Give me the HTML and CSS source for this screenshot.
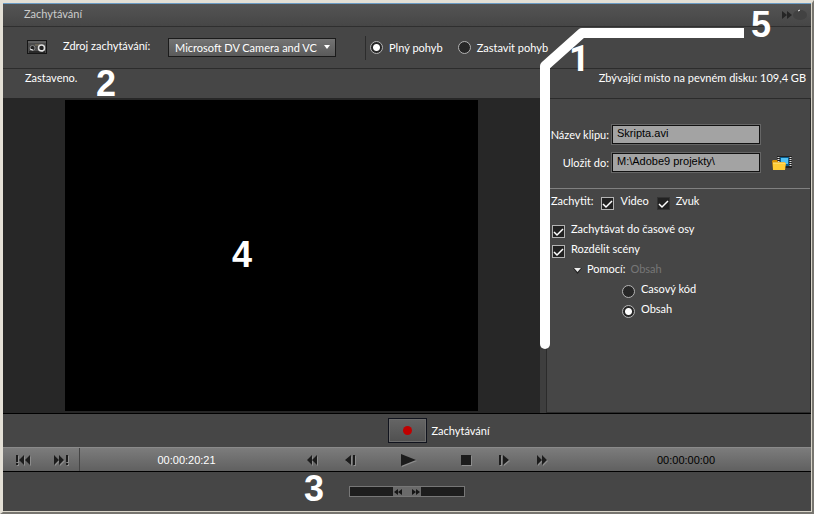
FILE: index.html
```html
<!DOCTYPE html>
<html lang="cs">
<head>
  <meta charset="UTF-8" />
  <meta name="viewport" content="width=device-width, initial-scale=1.0"/>
  <title>Zachytávání</title>
  <link rel="stylesheet" href="styles.css">
</head>
<body>

  <div class="window">

    <!-- Title bar -->
    <header class="title-bar">
      <h1>Zachytávání</h1>
      <button class="more-btn" aria-label="Další volby">
        <svg width="26" height="12" viewBox="0 0 26 12">
          <path d="M1 2l5 4-5 4zM6 2l5 4-5 4z" fill="#252525"/>
          <ellipse cx="19" cy="6" rx="7" ry="5" fill="#424242"/>
          <path d="M17 2l2-1" stroke="#eee"/>
        </svg>
      </button>
    </header>

    <!-- Capture source -->
    <div class="source-bar">
      <svg class="tape-icon" width="20" height="15" viewBox="0 0 20 15">
        <rect x=".5" y=".5" width="19" height="13" fill="#4b4b4b" stroke="#161616"/>
        <path d="M1 2h18" stroke="#777"/>
        <path d="M2 12h16" stroke="#292929" stroke-width="2"/>
        <path d="M8 5h5" stroke="#887f65"/>
        <circle cx="5.500" cy="8" r="2.500" fill="#222" stroke="#888"/>
        <circle cx="14.500" cy="8" r="3" fill="#222" stroke="#ddd" stroke-width="1.500"/>
        <path d="M3 9l3 1M12 10l4 1" stroke="#eee"/>
      </svg>
      <label class="source-label" for="source">Zdroj zachytávání:</label>
      <div class="select-box">
        <select id="source">
          <option>Microsoft DV Camera and VC</option>
        </select>
      </div>
      <div class="motion">
        <label><input type="radio" name="motion" checked> Plný pohyb</label>
        <label><input type="radio" name="motion"> Zastavit pohyb</label>
      </div>
    </div>

    <!-- Status -->
    <div class="status-bar">
      <span>Zastaveno.</span>
      <span>Zbývající místo na pevném disku: 109,4 GB</span>
    </div>

    <!-- Monitor and settings -->
    <main class="content">
      <div class="monitor">
        <div class="video"></div>
      </div>
      <div class="splitter"></div>
      <form class="settings">
        <div class="clip-fields">
          <label for="clipName">Název klipu:</label>
          <input type="text" id="clipName" value="Skripta.avi">
          <span></span>
          <label for="saveTo">Uložit do:</label>
          <input type="text" id="saveTo" value="M:\Adobe9 projekty\">
          <button type="button" class="folder-btn" aria-label="Procházet">
            <svg width="21" height="16" viewBox="0 0 21 16">
              <rect x="5" y="1" width="15" height="12" fill="#222"/>
              <path d="M6.500 2v10M18.500 2v10" stroke="#ddd" stroke-width="2" stroke-dasharray="1 1"/>
              <rect x="8" y="2" width="9" height="9" fill="#0b5d8e"/>
              <rect x="9" y="3" width="7" height="6" fill="#53c2f3"/>
              <path d="M0 6l1-1h4l1 2h7v8H1z" fill="#dc9400"/>
              <path d="M1 8h13l-1 7H1z" fill="#ffcc35"/>
              <path d="M1 8h12" stroke="#ffe88a"/>
            </svg>
          </button>
        </div>

        <div class="options">
          <div class="option-row">
            <span class="row-name">Zachytit:</span>
            <label><input type="checkbox" checked> <span>Video</span></label>
            <label><input type="checkbox" class="dim" checked> <span>Zvuk</span></label>
          </div>
          <div class="option-list">
            <label><input type="checkbox" checked> <span>Zachytávat do časové osy</span></label>
            <label><input type="checkbox" checked> <span>Rozdělit scény</span></label>
            <div class="method">
              <svg width="9" height="6" viewBox="0 0 9 6"><path d="M0 0h9L4.500 6z" fill="#222"/><path d="M1 0h7L4.500 4z" fill="#eee"/></svg>
              <span>Pomocí:</span>
              <span class="muted">Obsah</span>
            </div>
            <div class="method-list">
              <label><input type="radio" name="method"> <span>Casový kód</span></label>
              <label><input type="radio" name="method" checked> <span>Obsah</span></label>
            </div>
          </div>
        </div>
      </form>
    </main>

    <!-- Record -->
    <div class="record-bar">
      <button class="record-btn" id="record" aria-label="Zachytávání"><span class="dot"></span></button>
      <label for="record">Zachytávání</label>
    </div>

    <!-- Transport -->
    <div class="transport">
      <div class="scene-btns">
        <button aria-label="Předchozí scéna">
          <svg width="16" height="12" viewBox="0 0 16 12"><path d="M1 1h2v7H1zM1 9h2v2H1zM9 1v10L4 6zM15 1v10l-5-5z"/></svg>
        </button>
        <button aria-label="Další scéna">
          <svg width="16" height="12" viewBox="0 0 16 12"><path d="M1 1v10l5-5zM6 1v10l5-5zM13 1h2v7h-2zM13 9h2v2h-2z"/></svg>
        </button>
      </div>
      <span class="timecode current">00:00:20:21</span>
      <div class="play-btns">
        <button aria-label="Přetočit zpět">
          <svg width="12" height="12" viewBox="0 0 12 12"><path d="M6 1v10L1 6zM11 1v10L6 6z"/></svg>
        </button>
        <button aria-label="Krok zpět">
          <svg width="12" height="12" viewBox="0 0 12 12"><path d="M7 1v10L1 6zM9 1h2v10H9z"/></svg>
        </button>
        <button class="play-btn" aria-label="Přehrát">
          <svg width="16" height="12" viewBox="0 0 16 12"><path d="M1 0l15 6-15 6z"/></svg>
        </button>
        <button aria-label="Zastavit">
          <svg width="12" height="12" viewBox="0 0 12 12"><path d="M1 1h10v10H1z"/></svg>
        </button>
        <button aria-label="Krok vpřed">
          <svg width="12" height="12" viewBox="0 0 12 12"><path d="M1 1h2v10H1zM5 1v10l6-5z"/></svg>
        </button>
        <button aria-label="Přetočit vpřed">
          <svg width="12" height="12" viewBox="0 0 12 12"><path d="M1 1v10l5-5zM6 1v10l5-5z"/></svg>
        </button>
      </div>
      <span class="timecode total">00:00:00:00</span>
    </div>

    <!-- Shuttle -->
    <div class="shuttle">
      <input type="range" min="-10" max="10" value="0" aria-label="Rychlost posunu">
    </div>

  </div>

  <!-- Callouts over the window -->
  <div class="callouts">
    <svg width="814" height="360" viewBox="0 0 814 360">
      <path d="M744 33H582L545 66V344" fill="none" stroke="#fff" stroke-width="10" stroke-linejoin="round"/>
      <circle cx="545" cy="344" r="5" fill="#fff"/>
    </svg>
    <span class="num one">1</span>
    <span class="num two">2</span>
    <span class="num three">3</span>
    <span class="num four">4</span>
    <span class="num five">5</span>
  </div>

</body>
</html>
```
FILE: styles.css
```css
* {
  box-sizing: border-box;
}

body {
  margin: 0;
  position: relative;
  font-family: Lato, sans-serif;
  font-size: 11px;
  line-height: 16px;
  color: #fff;
  background: #464646;
}

button {
  padding: 0;
  border: none;
  background: none;
  cursor: pointer;
}

svg {
  display: block;
}

.window {
  display: flex;
  flex-direction: column;
  min-height: 100vh;
  padding: 0 1px 1px 0;
  border: 3px solid #e4e0d6;
  border-right: 2px solid #77756f;
  border-bottom: 2px solid #77756f;
  background: #464646;
  box-shadow: inset -1px -1px 0 #d8d4c8;
}

/* Title bar */
.title-bar {
  display: flex;
  justify-content: space-between;
  align-items: center;
  height: 24px;
  padding: 0 4px 0 21px;
  border-bottom: 1px solid #2f2f2f;
  background: linear-gradient(#545454, #464646);
  border-top: 1px solid #6b9cc5;
}

.title-bar h1 {
  margin: 0;
  padding-bottom: 2px;
  font-size: 11px;
  font-weight: 400;
  color: #ccc;
}

/* Capture source */
.source-bar {
  display: flex;
  align-items: center;
  height: 42px;
  padding-left: 24px;
  border-bottom: 1px solid #2c2c2c;
}

.source-label {
  width: 105px;
  margin-left: 16px;
  padding-bottom: 4px;
}

.select-box {
  position: relative;
  width: 168px;
}

.select-box select {
  width: 100%;
  height: 19px;
  padding: 0 6px;
  appearance: none;
  font: inherit;
  color: #fff;
  border: 1px solid #1b1b1b;
  border-radius: 0;
  background: linear-gradient(#747474, #5a5a5a);
}

.select-box::after {
  content: "";
  position: absolute;
  top: 7px;
  right: 6px;
  border: 3px solid transparent;
  border-top: 4px solid #fff;
  border-bottom: none;
}

.motion {
  display: flex;
  gap: 15px;
  margin-left: 29px;
  padding: 4px 0 4px 4px;
  border-left: 1px solid #2c2c2c;
}

.motion label {
  display: flex;
  align-items: center;
  gap: 6px;
}

input[type="radio"],
input[type="checkbox"] {
  flex: none;
  appearance: none;
  width: 13px;
  height: 13px;
  margin: 0;
  border: 1px solid #b4b4b4;
  background: #272727;
}

input[type="radio"] {
  border-radius: 50%;
}

input[type="radio"]:checked {
  background: radial-gradient(circle, #fff 3px, #272727 4px);
}

input[type="checkbox"]:checked {
  background: #222 url("data:image/svg+xml,%3Csvg xmlns='http://www.w3.org/2000/svg' width='11' height='11'%3E%3Cpath d='M1 6l3 3 6-6' fill='none' stroke='white' stroke-width='1.500'/%3E%3C/svg%3E") center no-repeat;
}

input[type="checkbox"].dim {
  border-color: #333;
}

/* Status */
.status-bar {
  display: flex;
  justify-content: space-between;
  height: 29px;
  padding: 1px 5px 0 22px;
}

/* Monitor and settings */
.content {
  display: flex;
  flex: 1;
  border-bottom: 1px solid #000;
}

.monitor {
  display: flex;
  flex: 1;
  justify-content: center;
  padding: 2px 0;
  background: #272727;
}

.video {
  width: 77%;
  background: #000;
}

.splitter {
  width: 6px;
  background: #3e3e3e;
}

.settings {
  width: 265px;
  border: 1px solid #2b2b2b;
}

.clip-fields {
  display: grid;
  grid-template-columns: 59px 148px 30px;
  column-gap: 3px;
  row-gap: 9px;
  align-items: center;
  padding: 26px 0 16px 3px;
  border-bottom: 1px solid #808080;
}

.clip-fields label {
  text-align: right;
  white-space: nowrap;
}

.clip-fields input {
  width: 100%;
  height: 19px;
  padding: 0 4px 3px;
  font-family: 'Liberation Sans', sans-serif;
  font-size: 11px;
  color: #000;
  border: 1px solid #111;
  outline: 1px solid #666;
  background: #a3a3a3;
}

.folder-btn {
  margin-left: 9px;
}

.options {
  padding: 4px;
}

.options label,
.option-row,
.method {
  display: flex;
  align-items: center;
  height: 20px;
}

.options label {
  gap: 6px;
}

.options label span,
.row-name,
.method span {
  padding-bottom: 4px;
}

.option-row {
  gap: 8px;
}

.option-list {
  padding: 8px 0 0 1px;
}

.method {
  gap: 5px;
  padding-left: 21px;
}

.method .muted {
  color: #777;
}

.method-list {
  padding-left: 70px;
}

/* Record */
.record-bar {
  display: grid;
  grid-template-columns: 1fr auto 1fr;
  align-items: center;
  column-gap: 5px;
  height: 33px;
}

.record-btn {
  grid-column: 2;
  display: flex;
  justify-content: center;
  align-items: center;
  width: 39px;
  height: 25px;
  border: 1px solid #10131d;
  background: linear-gradient(#656565, #505050);
  box-shadow: inset 0 0 0 1px #6c6c6c;
}

.dot {
  width: 9px;
  height: 9px;
  border-radius: 50%;
  background: #c00000;
}

/* Transport */
.transport {
  display: grid;
  grid-template-columns: 77px 214fr 266fr 251fr;
  align-items: center;
  height: 25px;
  border-top: 1px solid #8a8a8a;
  border-bottom: 1px solid #000;
  background: linear-gradient(#7c7c7c, #606060);
}

.transport path {
  fill: #1c1c1c;
}

.transport svg {
  filter: drop-shadow(1px 1px 0 #8d8d8d);
}

.scene-btns {
  display: flex;
  align-items: center;
  justify-content: space-between;
  height: 100%;
  padding: 0 10px 0 12px;
  border-right: 1px solid #444;
}

.timecode {
  font-family: 'Liberation Sans', sans-serif;
  text-align: center;
}

.total {
  color: #000;
}

.play-btns {
  display: flex;
  justify-content: center;
}

.play-btns button {
  display: flex;
  justify-content: center;
  width: 38px;
}

.play-btns .play-btn {
  width: 78px;
}

/* Shuttle */
.shuttle {
  display: flex;
  justify-content: center;
  height: 39px;
  padding-top: 14px;
}

.shuttle input {
  appearance: none;
  width: 116px;
  height: 11px;
  margin: 0;
  border: 1px solid #777;
  background: #1d1d1d;
}

.shuttle input::-webkit-slider-thumb {
  appearance: none;
  width: 28px;
  height: 9px;
  background: #6a6a6a url("data:image/svg+xml,%3Csvg xmlns='http://www.w3.org/2000/svg' width='28' height='9'%3E%3Cpath d='M5 2v6L1 5zM9 2v6L5 5zM19 2v6l4-3zM23 2v6l4-3z' fill='%23151515'/%3E%3C/svg%3E") center no-repeat;
}

/* Callouts */
.callouts {
  position: absolute;
  top: 0;
  left: 0;
  pointer-events: none;
}

.num {
  position: absolute;
  font-family: 'Liberation Sans', sans-serif;
  font-size: 36px;
  font-weight: 700;
  line-height: 36px;
}

.one {
  left: 569px;
  top: 41px;
  font-family: Roboto, sans-serif;
}

.two { left: 96px; top: 66px; }
.three { left: 304px; top: 471px; }
.four { left: 232px; top: 237px; }
.five { left: 751px; top: 7px; }
```
